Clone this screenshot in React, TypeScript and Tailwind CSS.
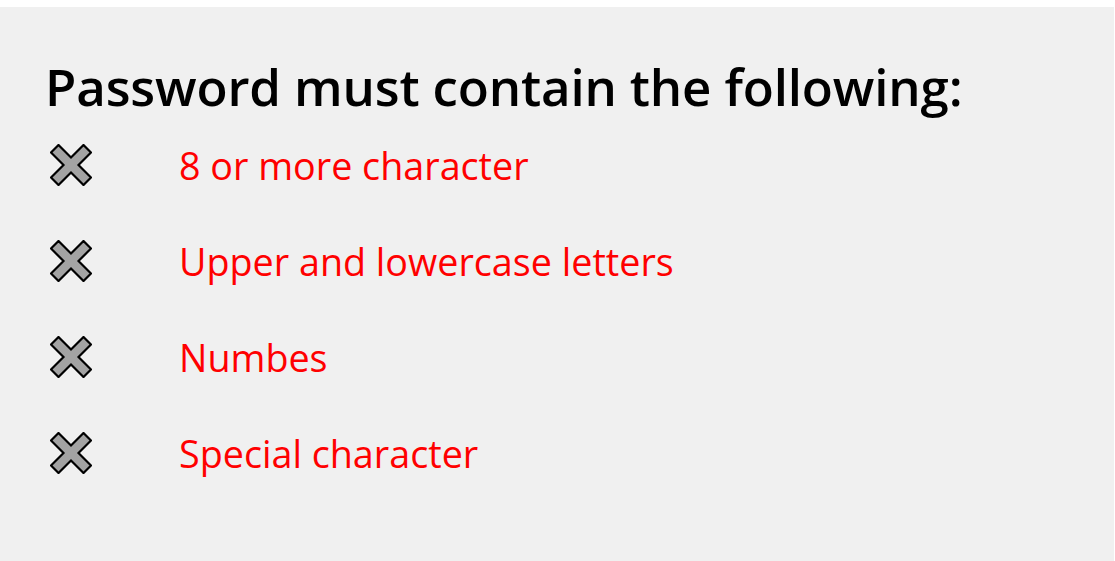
const rules = [
  '8 or more character',
  'Upper and lowercase letters',
  'Numbes',
  'Special character',
];

function CrossIcon() {
  const d = 7.5;
  const pts = [
    [1, 1 + d], [1 + d, 1], [21, 21 - d], [41 - d, 1], [41, 1 + d], [21 + d, 21],
    [41, 41 - d], [41 - d, 41], [21, 21 + d], [1 + d, 41], [1, 41 - d], [21 - d, 21],
  ]
    .map((p) => p.join(','))
    .join(' ');
  return (
    <svg width="42" height="42" viewBox="0 0 42 42" className="shrink-0">
      <polygon points={pts} fill="#a3a3a3" stroke="#000" strokeWidth={2.2} strokeLinejoin="miter" />
    </svg>
  );
}

export default function App() {
  return (
    <div className="min-h-screen bg-white pt-[7px] font-['Open_Sans',sans-serif]">
      <div className="w-[1114px] h-[554px] bg-[#f0f0f0] pl-[45px] pt-[47px]">
        <h1 className="text-[51px] leading-[64px] font-semibold text-black tracking-[-0.15px]">
          Password must contain the following:
        </h1>
        <ul className="mt-[26px] flex flex-col">
          {rules.map((rule) => (
            <li key={rule} className="h-[96px] flex items-start pl-[5px]">
              <CrossIcon />
              <span className="ml-[87px] -mt-[6px] text-[37.7px] leading-[56px] text-[#ff0000]">
                {rule}
              </span>
            </li>
          ))}
        </ul>
      </div>
    </div>
  );
}
